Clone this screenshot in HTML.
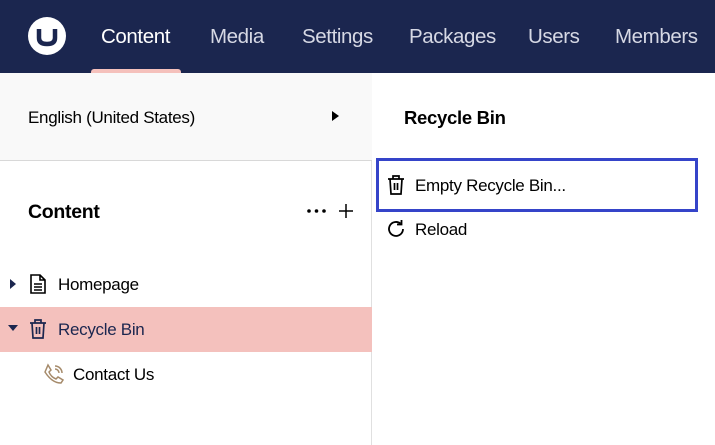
<!DOCTYPE html>
<html><head><style>
*{margin:0;padding:0;box-sizing:border-box}
body{width:715px;height:445px;overflow:hidden;background:#fff;font-family:"Liberation Sans",sans-serif;color:#1b264f;position:relative}
.hdr{position:absolute;left:0;top:0;width:715px;height:73px;background:#1b264f}
.nav{position:absolute;top:25px;font-size:20.5px;color:#d6d8e4;letter-spacing:-0.4px}
.ind{position:absolute;left:91px;top:69px;width:90px;height:6px;background:#f5c1bc;border-radius:3px 3px 0 0}
.left{position:absolute;left:0;top:73px;width:372px;height:372px;border-right:1px solid #e0e0e0}
.lang{position:absolute;left:0;top:0;width:372px;height:88px;background:#f9f9f9;border-bottom:1px solid #d8d8d8}
.t{position:absolute;font-size:17px;color:#000;white-space:nowrap;letter-spacing:-0.3px}
</style></head><body>
<div class="hdr">
 <svg style="position:absolute;left:28px;top:17px" width="38" height="38" viewBox="0 0 38 38"><circle cx="19" cy="19" r="19" fill="#fff"/><path d="M11 12 v9 q0 6 8 6 q8 0 8 -6 v-9" fill="none" stroke="#1b264f" stroke-width="4.5"/></svg>
 <div class="nav" style="left:101px;color:#fff">Content</div>
 <div class="nav" style="left:210px">Media</div>
 <div class="nav" style="left:302px">Settings</div>
 <div class="nav" style="left:409px">Packages</div>
 <div class="nav" style="left:528px">Users</div>
 <div class="nav" style="left:615px">Members</div>
 <div class="ind"></div>
</div>
<div class="left">
 <div class="lang">
  <div class="t" style="left:28px;top:35px">English (United States)</div>
  <svg style="position:absolute;left:332px;top:38px" width="8" height="10"><path d="M0 0L7 5L0 10Z" fill="#000"/></svg>
 </div>
 <div class="t" style="left:28px;top:128px;font-size:19.5px;font-weight:bold">Content</div>
 <svg style="position:absolute;left:307px;top:136px" width="20" height="4"><circle cx="2" cy="2" r="1.8" fill="#000"/><circle cx="9.5" cy="2" r="1.8" fill="#000"/><circle cx="17" cy="2" r="1.8" fill="#000"/></svg>
 <svg style="position:absolute;left:339px;top:131px" width="14" height="14"><path d="M7 0v14M0 7h14" stroke="#000" stroke-width="1.5"/></svg>
 <svg style="position:absolute;left:10px;top:206px" width="7" height="10"><path d="M0 0L6 5L0 10Z" fill="#1b264f"/></svg>
 <svg style="position:absolute;left:29px;top:201px" width="18" height="20" viewBox="0 0 18 20" fill="none" stroke="#000" stroke-width="1.6"><path d="M2 1h9l5 5v13H2z M11 1v5h5 M5 10h8 M5 13h8 M5 16h8"/></svg>
 <div class="t" style="left:58px;top:202px">Homepage</div>
 <div style="position:absolute;left:0;top:234px;width:372px;height:45px;background:#f4c1bd"></div>
 <svg style="position:absolute;left:8px;top:252px" width="10" height="7"><path d="M0 0L10 0L5 6Z" fill="#1b264f"/></svg>
 <svg style="position:absolute;left:29px;top:245px" width="18" height="22" viewBox="0 0 18 22" fill="none" stroke="#1b264f" stroke-width="1.7"><path d="M1 5h16 M6 5V2h6v3 M3 5l1 15h10l1-15 M7.5 9v7 M10.5 9v7"/></svg>
 <div class="t" style="left:58px;top:247px;color:#1b264f">Recycle Bin</div>
 <svg style="position:absolute;left:43px;top:290px" width="22" height="22" viewBox="0 0 22 22" fill="none" stroke="#a58a6a" stroke-width="1.5"><path d="M5 2l3 5-2 2q2 5 7 7l2-2 5 3-2 3q-9 0-16-11z M12 3a7 7 0 0 1 7 7 M12 6a4 4 0 0 1 4 4"/></svg>
 <div class="t" style="left:73px;top:292px">Contact Us</div>
</div>
<div class="t" style="left:404px;top:107px;font-size:18.5px;font-weight:bold">Recycle Bin</div>
<div style="position:absolute;left:376px;top:158px;width:322px;height:54px;border:3px solid #3544c9"></div>
<svg style="position:absolute;left:386px;top:174px" width="20" height="22" viewBox="0 0 18 22" fill="none" stroke="#000" stroke-width="1.7"><path d="M1 5h16 M6 5V2h6v3 M3 5l1 15h10l1-15 M7.5 9v7 M10.5 9v7"/></svg>
<div class="t" style="left:415px;top:176px">Empty Recycle Bin...</div>
<svg style="position:absolute;left:386px;top:219px" width="20" height="20" viewBox="0 0 20 20" fill="none" stroke="#000" stroke-width="1.8"><path d="M17 10a7 7 0 1 1-2.5-5.4"/><path d="M15.5 1v4.5H11" /></svg>
<div class="t" style="left:415px;top:220px">Reload</div>
</body></html>
